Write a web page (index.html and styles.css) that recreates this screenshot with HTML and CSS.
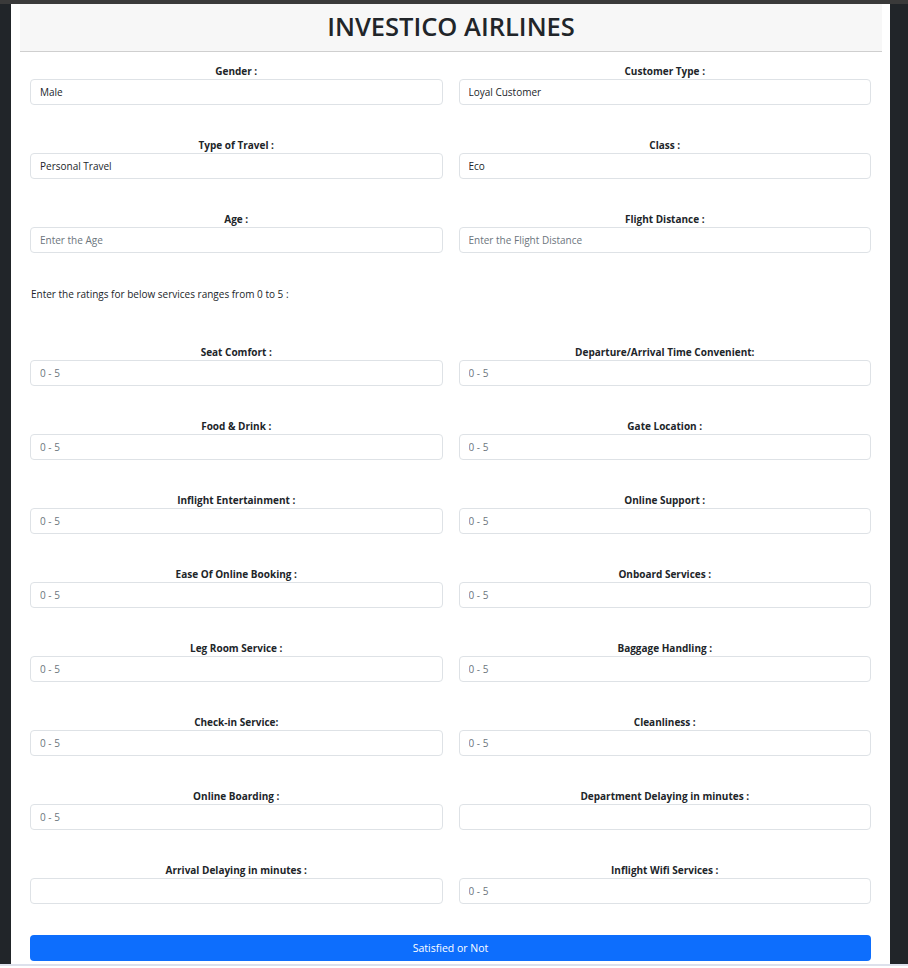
FILE: index.html
```html
<!DOCTYPE html>
<html lang="en">
<head>
<meta charset="utf-8">
<title>Investico Airlines</title>
<link rel="stylesheet" href="styles.css">
</head>
<body>
<div class="topbar"></div>
<div class="page">
  <div class="card">
    <div class="header"><h1 class="title">INVESTICO AIRLINES</h1></div>
    <form class="form">
      <div class="grid">
        <div class="field"><label class="label">Gender :</label><input class="input" value="Male"></div>
        <div class="field"><label class="label">Customer Type :</label><input class="input" value="Loyal Customer"></div>
        <div class="field"><label class="label">Type of Travel :</label><input class="input" value="Personal Travel"></div>
        <div class="field"><label class="label">Class :</label><input class="input" value="Eco"></div>
        <div class="field"><label class="label">Age :</label><input class="input" placeholder="Enter the Age"></div>
        <div class="field"><label class="label">Flight Distance :</label><input class="input" placeholder="Enter the Flight Distance"></div>
      </div>
      <p class="note">Enter the ratings for below services ranges from 0 to 5 :</p>
      <div class="grid">
        <div class="field"><label class="label">Seat Comfort :</label><input class="input" placeholder="0 - 5"></div>
        <div class="field"><label class="label">Departure/Arrival Time Convenient:</label><input class="input" placeholder="0 - 5"></div>
        <div class="field"><label class="label">Food &amp; Drink :</label><input class="input" placeholder="0 - 5"></div>
        <div class="field"><label class="label">Gate Location :</label><input class="input" placeholder="0 - 5"></div>
        <div class="field"><label class="label">Inflight Entertainment :</label><input class="input" placeholder="0 - 5"></div>
        <div class="field"><label class="label">Online Support :</label><input class="input" placeholder="0 - 5"></div>
        <div class="field"><label class="label">Ease Of Online Booking :</label><input class="input" placeholder="0 - 5"></div>
        <div class="field"><label class="label">Onboard Services :</label><input class="input" placeholder="0 - 5"></div>
        <div class="field"><label class="label">Leg Room Service :</label><input class="input" placeholder="0 - 5"></div>
        <div class="field"><label class="label">Baggage Handling :</label><input class="input" placeholder="0 - 5"></div>
        <div class="field"><label class="label">Check-in Service:</label><input class="input" placeholder="0 - 5"></div>
        <div class="field"><label class="label">Cleanliness :</label><input class="input" placeholder="0 - 5"></div>
        <div class="field"><label class="label">Online Boarding :</label><input class="input" placeholder="0 - 5"></div>
        <div class="field"><label class="label">Department Delaying in minutes :</label><input class="input"></div>
        <div class="field"><label class="label">Arrival Delaying in minutes :</label><input class="input"></div>
        <div class="field"><label class="label">Inflight Wifi Services :</label><input class="input" placeholder="0 - 5"></div>
      </div>
      <button type="button" class="btn">Satisfied or Not</button>
    </form>
  </div>
</div>
<div class="bottomline"></div>
</body>
</html>
```
FILE: styles.css
```css
* { box-sizing: border-box; }
html, body { margin: 0; padding: 0; }
body {
  background: #fff;
  font-family: "Open Sans", "Noto Sans", sans-serif;
  color: #212529;
}
.topbar { height: 4px; background: #3a3a3a; }
.page {
  background: #212529;
  padding: 0 18px 0 11px;
}
.card {
  background: #fff;
  padding: 0 8px 3px 9px;
}
.header {
  background: #f7f7f7;
  border-bottom: 1px solid #cfcfcf;
  height: 48px;
  display: flex;
  align-items: center;
  justify-content: center;
}
.title {
  margin: 0;
  font-size: 25.5px;
  font-weight: 600;
  color: #212529;
  line-height: 1;
  padding-bottom: 2px;
}
.form {
  padding: 11px 11px 0 10px;
}
.grid {
  display: grid;
  grid-template-columns: 1fr 1fr;
  column-gap: 16px;
  row-gap: 32px;
}
.field { display: flex; flex-direction: column; }
.label {
  display: block;
  text-align: center;
  font-weight: 700;
  font-size: 10px;
  line-height: 16px;
  color: #212529;
}
.input {
  height: 26px;
  border: 1px solid #dee2e6;
  border-radius: 4px;
  padding: 0 9px;
  font-family: inherit;
  font-size: 10px;
  color: #212529;
  background: #fff;
  outline: none;
}
.input::placeholder { color: #6c757d; }
.note {
  margin: 33px 0 42px 1px;
  font-size: 10px;
  line-height: 16px;
}
.btn {
  display: block;
  width: 100%;
  margin-top: 31px;
  height: 26px;
  border: 0;
  border-radius: 4px;
  background: #0d6efd;
  color: #fff;
  font-family: inherit;
  font-size: 10.5px;
}
.bottomline { height: 2px; background: #dde1ec; }
```
